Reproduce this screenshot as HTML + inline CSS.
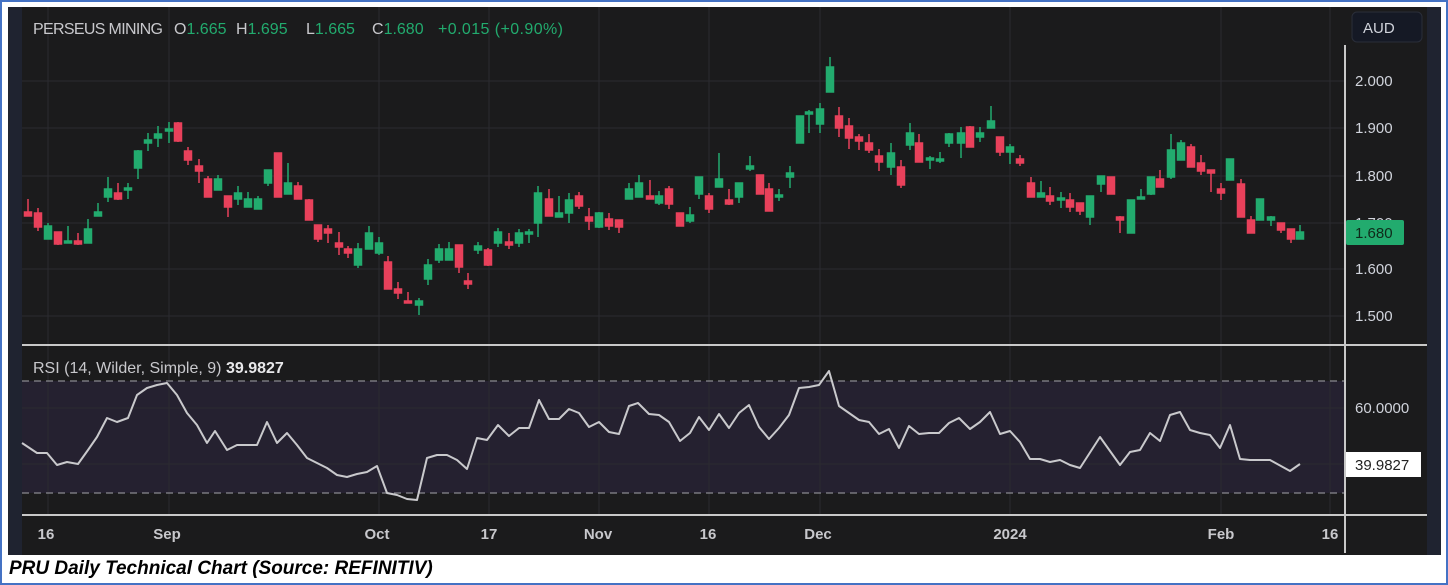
<!DOCTYPE html>
<html><head><meta charset="utf-8"><style>
html,body{margin:0;padding:0;background:#fff;}
body{width:1448px;height:585px;position:relative;overflow:hidden;font-family:"Liberation Sans",sans-serif;}
.frame{position:absolute;left:0;top:0;width:1444px;height:581px;border:2px solid #4472c4;}
.cap{position:absolute;left:9px;top:558px;font-weight:bold;font-style:italic;font-size:19px;color:#000;}
svg{position:absolute;left:0;top:0;}
</style></head><body>
<div class="frame"></div>
<svg width="1448" height="585" viewBox="0 0 1448 585" font-family="Liberation Sans, sans-serif">
<rect x="8" y="7" width="1433" height="548" fill="#1b1b1c"/>
<rect x="8" y="7" width="14" height="548" fill="#1f2330"/>
<rect x="1427" y="7" width="14" height="548" fill="#1f2330"/>
<rect x="22" y="381" width="1323" height="112" fill="#252130"/>
<g stroke="#2b2b30" stroke-width="1">
<line x1="22" y1="81" x2="1345" y2="81"/><line x1="22" y1="128" x2="1345" y2="128"/>
<line x1="22" y1="176" x2="1345" y2="176"/><line x1="22" y1="223" x2="1345" y2="223"/>
<line x1="22" y1="269" x2="1345" y2="269"/><line x1="22" y1="316" x2="1345" y2="316"/>
<line x1="22" y1="408" x2="1345" y2="408"/><line x1="22" y1="464" x2="1345" y2="464"/>
<line x1="48" y1="7" x2="48" y2="515"/><line x1="169" y1="7" x2="169" y2="515"/>
<line x1="379" y1="7" x2="379" y2="515"/><line x1="489" y1="7" x2="489" y2="515"/>
<line x1="599" y1="7" x2="599" y2="515"/><line x1="709" y1="7" x2="709" y2="515"/>
<line x1="820" y1="7" x2="820" y2="515"/><line x1="1010" y1="7" x2="1010" y2="515"/>
<line x1="1221" y1="7" x2="1221" y2="515"/><line x1="1330" y1="7" x2="1330" y2="515"/>
</g>
<g stroke="#8a8a90" stroke-width="1.3" stroke-dasharray="7,5">
<line x1="22" y1="381" x2="1345" y2="381"/><line x1="22" y1="493" x2="1345" y2="493"/>
</g>
<g stroke="#c8c8c8" stroke-width="2">
<line x1="22" y1="345" x2="1427" y2="345"/><line x1="22" y1="515" x2="1427" y2="515"/>
<line x1="1345" y1="45" x2="1345" y2="553"/>
</g>
<g stroke-width="1.5">
<g stroke="#22ab6e" fill="#22ab6e">
<line x1="48" y1="223" x2="48" y2="239"/><rect x="44.5" y="226" width="7" height="13"/>
<line x1="68" y1="226" x2="68" y2="243"/><rect x="64.5" y="241" width="7" height="2"/>
<line x1="88" y1="219" x2="88" y2="243"/><rect x="84.5" y="229" width="7" height="14"/>
<line x1="98" y1="203" x2="98" y2="216"/><rect x="94.5" y="212" width="7" height="4"/>
<line x1="108" y1="177" x2="108" y2="202"/><rect x="104.5" y="189" width="7" height="8"/>
<line x1="128" y1="183" x2="128" y2="199"/><rect x="124.5" y="188" width="7" height="2"/>
<line x1="138" y1="150" x2="138" y2="179"/><rect x="134.5" y="151" width="7" height="17"/>
<line x1="148" y1="133" x2="148" y2="151"/><rect x="144.5" y="140" width="7" height="3"/>
<line x1="158" y1="126" x2="158" y2="147"/><rect x="154.5" y="134" width="7" height="4"/>
<line x1="169" y1="122" x2="169" y2="143"/><rect x="165.5" y="129" width="7" height="2"/>
<line x1="218" y1="175" x2="218" y2="190"/><rect x="214.5" y="179" width="7" height="11"/>
<line x1="238" y1="186" x2="238" y2="205"/><rect x="234.5" y="193" width="7" height="6"/>
<line x1="248" y1="192" x2="248" y2="207"/><rect x="244.5" y="199" width="7" height="8"/>
<line x1="258" y1="196" x2="258" y2="209"/><rect x="254.5" y="199" width="7" height="10"/>
<line x1="268" y1="170" x2="268" y2="186"/><rect x="264.5" y="170" width="7" height="13"/>
<line x1="288" y1="163" x2="288" y2="194"/><rect x="284.5" y="183" width="7" height="11"/>
<line x1="358" y1="243" x2="358" y2="268"/><rect x="354.5" y="249" width="7" height="16"/>
<line x1="369" y1="226" x2="369" y2="249"/><rect x="365.5" y="233" width="7" height="16"/>
<line x1="379" y1="237" x2="379" y2="255"/><rect x="375.5" y="243" width="7" height="10"/>
<line x1="419" y1="298" x2="419" y2="315"/><rect x="415.5" y="301" width="7" height="4"/>
<line x1="428" y1="259" x2="428" y2="285"/><rect x="424.5" y="265" width="7" height="14"/>
<line x1="439" y1="244" x2="439" y2="263"/><rect x="435.5" y="249" width="7" height="11"/>
<line x1="449" y1="242" x2="449" y2="260"/><rect x="445.5" y="249" width="7" height="11"/>
<line x1="478" y1="242" x2="478" y2="254"/><rect x="474.5" y="246" width="7" height="4"/>
<line x1="498" y1="228" x2="498" y2="247"/><rect x="494.5" y="232" width="7" height="11"/>
<line x1="519" y1="229" x2="519" y2="247"/><rect x="515.5" y="233" width="7" height="10"/>
<line x1="529" y1="229" x2="529" y2="243"/><rect x="525.5" y="232" width="7" height="2"/>
<line x1="538" y1="186" x2="538" y2="237"/><rect x="534.5" y="193" width="7" height="30"/>
<line x1="559" y1="196" x2="559" y2="217"/><rect x="555.5" y="213" width="7" height="4"/>
<line x1="569" y1="193" x2="569" y2="223"/><rect x="565.5" y="200" width="7" height="13"/>
<line x1="599" y1="212" x2="599" y2="228"/><rect x="595.5" y="213" width="7" height="14"/>
<line x1="629" y1="183" x2="629" y2="199"/><rect x="625.5" y="189" width="7" height="10"/>
<line x1="639" y1="175" x2="639" y2="197"/><rect x="635.5" y="183" width="7" height="14"/>
<line x1="659" y1="191" x2="659" y2="205"/><rect x="655.5" y="196" width="7" height="7"/>
<line x1="690" y1="207" x2="690" y2="223"/><rect x="686.5" y="215" width="7" height="6"/>
<line x1="699" y1="177" x2="699" y2="199"/><rect x="695.5" y="177" width="7" height="17"/>
<line x1="719" y1="153" x2="719" y2="187"/><rect x="715.5" y="179" width="7" height="8"/>
<line x1="739" y1="183" x2="739" y2="203"/><rect x="735.5" y="183" width="7" height="14"/>
<line x1="750" y1="156" x2="750" y2="171"/><rect x="746.5" y="166" width="7" height="3"/>
<line x1="779" y1="189" x2="779" y2="201"/><rect x="775.5" y="195" width="7" height="2"/>
<line x1="790" y1="166" x2="790" y2="188"/><rect x="786.5" y="173" width="7" height="4"/>
<line x1="800" y1="116" x2="800" y2="143"/><rect x="796.5" y="116" width="7" height="27"/>
<line x1="809" y1="110" x2="809" y2="133"/><rect x="805.5" y="112" width="7" height="2"/>
<line x1="820" y1="103" x2="820" y2="133"/><rect x="816.5" y="109" width="7" height="15"/>
<line x1="830" y1="57" x2="830" y2="92"/><rect x="826.5" y="67" width="7" height="25"/>
<line x1="891" y1="143" x2="891" y2="175"/><rect x="887.5" y="153" width="7" height="14"/>
<line x1="910" y1="123" x2="910" y2="150"/><rect x="906.5" y="133" width="7" height="12"/>
<line x1="930" y1="156" x2="930" y2="169"/><rect x="926.5" y="158" width="7" height="2"/>
<line x1="940" y1="152" x2="940" y2="163"/><rect x="936.5" y="159" width="7" height="2"/>
<line x1="949" y1="133" x2="949" y2="147"/><rect x="945.5" y="134" width="7" height="9"/>
<line x1="961" y1="127" x2="961" y2="158"/><rect x="957.5" y="133" width="7" height="10"/>
<line x1="980" y1="127" x2="980" y2="142"/><rect x="976.5" y="133" width="7" height="4"/>
<line x1="991" y1="106" x2="991" y2="128"/><rect x="987.5" y="121" width="7" height="7"/>
<line x1="1010" y1="144" x2="1010" y2="164"/><rect x="1006.5" y="147" width="7" height="5"/>
<line x1="1041" y1="181" x2="1041" y2="197"/><rect x="1037.5" y="193" width="7" height="4"/>
<line x1="1061" y1="192" x2="1061" y2="208"/><rect x="1057.5" y="198" width="7" height="2"/>
<line x1="1090" y1="196" x2="1090" y2="225"/><rect x="1086.5" y="196" width="7" height="21"/>
<line x1="1101" y1="176" x2="1101" y2="192"/><rect x="1097.5" y="176" width="7" height="8"/>
<line x1="1131" y1="200" x2="1131" y2="233"/><rect x="1127.5" y="200" width="7" height="33"/>
<line x1="1141" y1="189" x2="1141" y2="199"/><rect x="1137.5" y="197" width="7" height="2"/>
<line x1="1151" y1="177" x2="1151" y2="195"/><rect x="1147.5" y="177" width="7" height="17"/>
<line x1="1171" y1="134" x2="1171" y2="179"/><rect x="1167.5" y="150" width="7" height="27"/>
<line x1="1181" y1="140" x2="1181" y2="160"/><rect x="1177.5" y="143" width="7" height="17"/>
<line x1="1230" y1="159" x2="1230" y2="180"/><rect x="1226.5" y="159" width="7" height="21"/>
<line x1="1260" y1="199" x2="1260" y2="220"/><rect x="1256.5" y="199" width="7" height="21"/>
<line x1="1271" y1="216" x2="1271" y2="226"/><rect x="1267.5" y="217" width="7" height="3"/>
<line x1="1300" y1="225" x2="1300" y2="239"/><rect x="1296.5" y="232" width="7" height="7"/>
</g>
<g stroke="#e8415b" fill="#e8415b">
<line x1="28" y1="199" x2="28" y2="216"/><rect x="24.5" y="212" width="7" height="4"/>
<line x1="38" y1="208" x2="38" y2="231"/><rect x="34.5" y="213" width="7" height="14"/>
<line x1="58" y1="232" x2="58" y2="245"/><rect x="54.5" y="232" width="7" height="12"/>
<line x1="78" y1="233" x2="78" y2="245"/><rect x="74.5" y="241" width="7" height="3"/>
<line x1="118" y1="183" x2="118" y2="200"/><rect x="114.5" y="193" width="7" height="6"/>
<line x1="178" y1="122" x2="178" y2="142"/><rect x="174.5" y="123" width="7" height="18"/>
<line x1="188" y1="147" x2="188" y2="165"/><rect x="184.5" y="151" width="7" height="9"/>
<line x1="199" y1="159" x2="199" y2="183"/><rect x="195.5" y="166" width="7" height="5"/>
<line x1="208" y1="176" x2="208" y2="197"/><rect x="204.5" y="179" width="7" height="18"/>
<line x1="228" y1="196" x2="228" y2="217"/><rect x="224.5" y="196" width="7" height="11"/>
<line x1="278" y1="153" x2="278" y2="197"/><rect x="274.5" y="153" width="7" height="44"/>
<line x1="298" y1="182" x2="298" y2="199"/><rect x="294.5" y="186" width="7" height="13"/>
<line x1="309" y1="199" x2="309" y2="220"/><rect x="305.5" y="200" width="7" height="20"/>
<line x1="318" y1="225" x2="318" y2="242"/><rect x="314.5" y="225" width="7" height="14"/>
<line x1="328" y1="225" x2="328" y2="243"/><rect x="324.5" y="229" width="7" height="4"/>
<line x1="339" y1="232" x2="339" y2="255"/><rect x="335.5" y="243" width="7" height="4"/>
<line x1="348" y1="246" x2="348" y2="258"/><rect x="344.5" y="249" width="7" height="4"/>
<line x1="388" y1="256" x2="388" y2="289"/><rect x="384.5" y="262" width="7" height="27"/>
<line x1="398" y1="282" x2="398" y2="299"/><rect x="394.5" y="289" width="7" height="4"/>
<line x1="408" y1="292" x2="408" y2="303"/><rect x="404.5" y="301" width="7" height="2"/>
<line x1="459" y1="245" x2="459" y2="273"/><rect x="455.5" y="245" width="7" height="22"/>
<line x1="468" y1="273" x2="468" y2="289"/><rect x="464.5" y="281" width="7" height="3"/>
<line x1="488" y1="248" x2="488" y2="266"/><rect x="484.5" y="250" width="7" height="15"/>
<line x1="509" y1="233" x2="509" y2="249"/><rect x="505.5" y="242" width="7" height="3"/>
<line x1="549" y1="189" x2="549" y2="216"/><rect x="545.5" y="199" width="7" height="17"/>
<line x1="579" y1="192" x2="579" y2="209"/><rect x="575.5" y="196" width="7" height="10"/>
<line x1="589" y1="208" x2="589" y2="230"/><rect x="585.5" y="217" width="7" height="4"/>
<line x1="609" y1="213" x2="609" y2="230"/><rect x="605.5" y="219" width="7" height="7"/>
<line x1="619" y1="220" x2="619" y2="233"/><rect x="615.5" y="220" width="7" height="7"/>
<line x1="650" y1="180" x2="650" y2="199"/><rect x="646.5" y="196" width="7" height="3"/>
<line x1="669" y1="186" x2="669" y2="209"/><rect x="665.5" y="189" width="7" height="15"/>
<line x1="680" y1="213" x2="680" y2="226"/><rect x="676.5" y="213" width="7" height="13"/>
<line x1="709" y1="193" x2="709" y2="213"/><rect x="705.5" y="196" width="7" height="13"/>
<line x1="729" y1="189" x2="729" y2="205"/><rect x="725.5" y="200" width="7" height="4"/>
<line x1="760" y1="175" x2="760" y2="194"/><rect x="756.5" y="175" width="7" height="19"/>
<line x1="769" y1="183" x2="769" y2="211"/><rect x="765.5" y="189" width="7" height="22"/>
<line x1="839" y1="107" x2="839" y2="137"/><rect x="835.5" y="116" width="7" height="12"/>
<line x1="849" y1="118" x2="849" y2="149"/><rect x="845.5" y="126" width="7" height="12"/>
<line x1="859" y1="134" x2="859" y2="150"/><rect x="855.5" y="137" width="7" height="4"/>
<line x1="869" y1="134" x2="869" y2="153"/><rect x="865.5" y="143" width="7" height="7"/>
<line x1="879" y1="149" x2="879" y2="171"/><rect x="875.5" y="156" width="7" height="6"/>
<line x1="901" y1="160" x2="901" y2="188"/><rect x="897.5" y="167" width="7" height="18"/>
<line x1="919" y1="134" x2="919" y2="162"/><rect x="915.5" y="143" width="7" height="19"/>
<line x1="970" y1="126" x2="970" y2="147"/><rect x="966.5" y="127" width="7" height="20"/>
<line x1="1000" y1="137" x2="1000" y2="156"/><rect x="996.5" y="137" width="7" height="15"/>
<line x1="1020" y1="155" x2="1020" y2="166"/><rect x="1016.5" y="159" width="7" height="4"/>
<line x1="1031" y1="177" x2="1031" y2="197"/><rect x="1027.5" y="183" width="7" height="14"/>
<line x1="1050" y1="187" x2="1050" y2="205"/><rect x="1046.5" y="196" width="7" height="5"/>
<line x1="1070" y1="193" x2="1070" y2="212"/><rect x="1066.5" y="200" width="7" height="7"/>
<line x1="1080" y1="203" x2="1080" y2="215"/><rect x="1076.5" y="203" width="7" height="8"/>
<line x1="1111" y1="177" x2="1111" y2="194"/><rect x="1107.5" y="177" width="7" height="17"/>
<line x1="1120" y1="216" x2="1120" y2="233"/><rect x="1116.5" y="217" width="7" height="3"/>
<line x1="1160" y1="170" x2="1160" y2="187"/><rect x="1156.5" y="179" width="7" height="8"/>
<line x1="1191" y1="144" x2="1191" y2="167"/><rect x="1187.5" y="147" width="7" height="20"/>
<line x1="1201" y1="155" x2="1201" y2="175"/><rect x="1197.5" y="163" width="7" height="8"/>
<line x1="1211" y1="170" x2="1211" y2="192"/><rect x="1207.5" y="170" width="7" height="3"/>
<line x1="1221" y1="183" x2="1221" y2="200"/><rect x="1217.5" y="189" width="7" height="4"/>
<line x1="1241" y1="179" x2="1241" y2="217"/><rect x="1237.5" y="184" width="7" height="33"/>
<line x1="1251" y1="216" x2="1251" y2="233"/><rect x="1247.5" y="220" width="7" height="13"/>
<line x1="1281" y1="223" x2="1281" y2="233"/><rect x="1277.5" y="223" width="7" height="7"/>
<line x1="1291" y1="229" x2="1291" y2="243"/><rect x="1287.5" y="229" width="7" height="10"/>
</g>
</g>
<polyline fill="none" stroke="#c9c9cc" stroke-width="2" stroke-linejoin="round" points="22,443 37,453 47,453 57,465 67,462 78,464 88,450 97,437 107,418 117,422 128,418 137,395 147,388 157,385 167,383 177,395 187,413 197,425 207,443 215,431 227,450 237,445 257,445 267,422 277,443 287,433 297,445 307,458 317,463 327,468 337,475 347,477 357,474 367,472 377,466 387,493 397,495 407,499 417,500 427,458 437,455 447,455 457,460 467,469 477,438 487,440 498,425 509,436 519,428 529,428 539,400 549,419 559,419 569,409 579,413 589,427 599,422 609,432 619,434 629,406 638,403 649,414 659,415 669,422 680,441 690,433 699,417 709,430 719,414 729,428 739,413 749,405 759,427 769,439 779,428 789,415 799,388 809,387 819,385 829,371 839,406 849,413 859,420 869,422 879,434 889,429 899,448 909,426 919,434 929,433 939,433 949,423 959,418 970,429 980,422 990,412 1000,434 1010,431 1020,442 1030,459 1040,459 1050,462 1060,460 1070,465 1080,468 1100,437 1120,465 1130,452 1140,450 1150,433 1160,441 1170,415 1180,412 1190,430 1200,433 1210,435 1220,448 1230,425 1240,459 1250,460 1270,460 1290,471 1300,464"/>
<g font-size="16">
<text x="33" y="34" fill="#c8c8cc" textLength="130">PERSEUS MINING</text>
<text x="174" y="34" fill="#c8c8cc">O<tspan fill="#22ab6e">1.665</tspan></text>
<text x="236" y="34" fill="#c8c8cc">H<tspan fill="#22ab6e">1.695</tspan></text>
<text x="306" y="34" fill="#c8c8cc">L<tspan fill="#22ab6e">1.665</tspan></text>
<text x="372" y="34" fill="#c8c8cc">C<tspan fill="#22ab6e">1.680</tspan></text>
<text x="438" y="34" fill="#22ab6e" textLength="125">+0.015 (+0.90%)</text>
</g>
<rect x="1352" y="12" width="70" height="30" rx="5" fill="#151925" stroke="#2a2e39"/>
<text x="1363" y="33" font-size="15" fill="#d1d4dc">AUD</text>
<g font-size="15" fill="#d1d4dc">
<text x="1355" y="86">2.000</text><text x="1355" y="133">1.900</text>
<text x="1355" y="181">1.800</text><text x="1355" y="228">1.700</text>
<text x="1355" y="274">1.600</text><text x="1355" y="321">1.500</text>
<text x="1355" y="413">60.0000</text>
</g>
<rect x="1346" y="220" width="58" height="25" rx="2" fill="#22ab6e"/>
<text x="1355" y="238" font-size="15" fill="#0f2a1a">1.680</text>
<rect x="1346" y="452" width="75" height="25" fill="#ffffff"/>
<text x="1355" y="470" font-size="15" fill="#222">39.9827</text>
<text x="33" y="373" font-size="16" fill="#c8c8cc">RSI (14, Wilder, Simple, 9)  <tspan fill="#e8e8ea" font-weight="bold">39.9827</tspan></text>
<g font-size="15" fill="#c8c8cc" font-weight="bold" text-anchor="middle">
<text x="46" y="539">16</text><text x="167" y="539">Sep</text><text x="377" y="539">Oct</text>
<text x="489" y="539">17</text><text x="598" y="539">Nov</text><text x="708" y="539">16</text>
<text x="818" y="539">Dec</text><text x="1010" y="539">2024</text><text x="1221" y="539">Feb</text>
<text x="1330" y="539">16</text>
</g>
</svg>
<div class="cap">PRU Daily Technical Chart (Source: REFINITIV)</div>
</body></html>
